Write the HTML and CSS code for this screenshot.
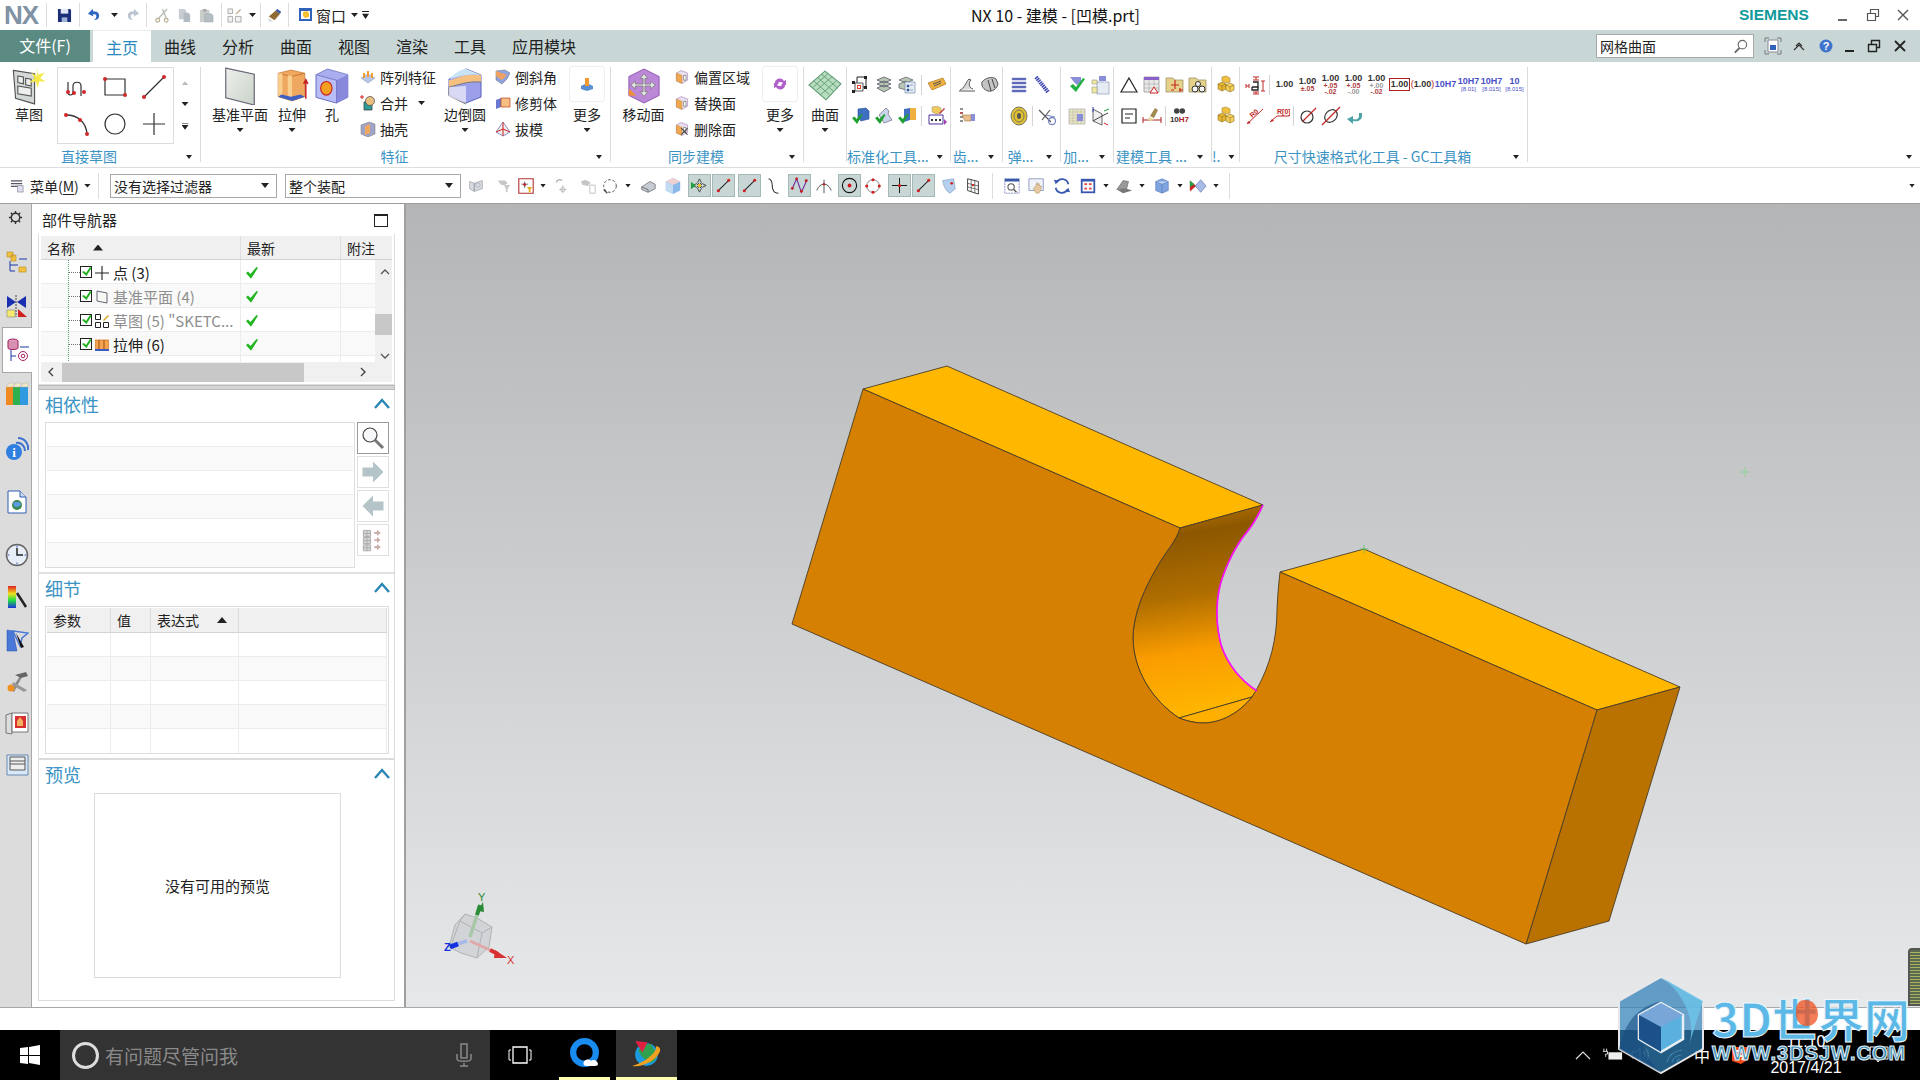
FILE: index.html
```html
<!DOCTYPE html>
<html lang="zh-CN">
<head>
<meta charset="UTF-8">
<title>NX 10 - 建模 - [凹模.prt]</title>
<link rel="stylesheet" href="styles.css">
</head>
<body>

<svg class="defs" width="0" height="0">
  <defs>
    <linearGradient id="notchFill" x1="0.45" y1="0" x2="0.55" y2="1">
      <stop offset="0" stop-color="#b87400"/>
      <stop offset="0.13" stop-color="#8c5700"/>
      <stop offset="0.42" stop-color="#b06e00"/>
      <stop offset="0.68" stop-color="#fa9c00"/>
      <stop offset="1" stop-color="#ffb900"/>
    </linearGradient>
    <linearGradient id="viewBg" x1="0" y1="0" x2="0" y2="1">
      <stop offset="0" stop-color="#b4b5b6"/>
      <stop offset="1" stop-color="#e7e8ea"/>
    </linearGradient>
    <linearGradient id="planeFill" x1="0" y1="0" x2="1" y2="1">
      <stop offset="0" stop-color="#eef0ec"/>
      <stop offset="1" stop-color="#c8d2c8"/>
    </linearGradient>
    <symbol id="gold" viewBox="0 0 20 20">
      <path d="M6 2l4-1 4 2v4l-4 1-4-2z" fill="#f0c040" stroke="#a5842c" stroke-width=".6"/>
      <path d="M2 9l4-2 4 2v5l-4 2-4-2z" fill="#e8b830" stroke="#8a7028" stroke-width=".6"/>
      <path d="M10 10l4-2 4 2v5l-4 2-4-2z" fill="#f6d25a" stroke="#8a7028" stroke-width=".6"/>
      <path d="M2 9l4 2 4-2M10 10l4 2 4-2M6 11v5M14 12v5" fill="none" stroke="#8a7028" stroke-width=".6"/>
    </symbol>
    <symbol id="tick" viewBox="0 0 14 14">
      <path d="M1 7l2-1.500 2.500 2.500 6-7 1.500.8-7 11z" fill="#22b522"/>
    </symbol>
    <symbol id="chk" viewBox="0 0 13 13">
      <rect x=".5" y=".5" width="11" height="11" fill="#fff" stroke="#222"/>
      <path d="M2 6l2-1 2 2 4-6 1.500 1-5 8z" fill="#1eb01e"/>
    </symbol>
    <symbol id="greyblock" viewBox="0 0 20 20">
      <path d="M3 5l5 2v9l-5-3zM8 7l9-3v9l-9 3z" fill="#d8dbe0" stroke="#9aa0a8" stroke-width=".8"/>
      <circle cx="12" cy="9" r="2.500" fill="none" stroke="#aab" stroke-width=".8"/>
    </symbol>
    <symbol id="lineRed" viewBox="0 0 22 22">
      <path d="M5 17L17 5" stroke="#222" stroke-width="1.200"/>
      <circle cx="5" cy="17" r="1.800" fill="#d02020"/><circle cx="17" cy="5" r="1.800" fill="#d02020"/>
    </symbol>
    <symbol id="faceCube" viewBox="0 0 20 20">
      <path d="M9 2l8 3v9l-7 4-7-3V5z" fill="#e8e0ee" stroke="#9a7ab0" stroke-width=".7"/>
      <path d="M3 5l7 3v10l-7-3z" fill="#f0a850" stroke="#c07820" stroke-width=".5"/>
      <path d="M12 8h3v6h-3z" fill="#fff" stroke="#555" stroke-width=".7"/>
    </symbol>
    <symbol id="greentickA" viewBox="0 0 20 20">
      <path d="M7 3l8-1 3 3v8l-8 2-3-3z" fill="#3f6fc0" stroke="#23509a" stroke-width=".6"/>
      <path d="M1 12l2.500-1.500 2 2.500L10 8l1.500 1L6 18z" fill="#20a030"/>
    </symbol>
  </defs>
</svg>

<!-- title bar -->
<header class="titlebar">
  <div class="qat">
    <span class="nx-logo">NX</span>
    <i class="qsep"></i>
    <svg class="qi q-save" viewBox="0 0 16 16"><path d="M1 1h13l1 1v13H1z" fill="#1b2e78"/><path d="M4 1h8v5H4z" fill="#dfe6f4"/><path d="M5 10h6v5H5z" fill="#9fb3d8"/></svg>
    <i class="qsep q-s1"></i>
    <svg class="qi q-undo" viewBox="0 0 16 16"><path d="M7 13c4 0 6-2 6-5s-3-5-6-4L6 1 1 6l6 3-1-2c3-1 4 0 4 2 0 1-1 3-3 4z" fill="#2c66c0"/></svg>
    <span class="arr q-a1"></span>
    <svg class="qi q-redo" viewBox="0 0 16 16"><path d="M9 13c-4 0-6-2-6-5s3-5 6-4l1-3 5 5-6 3 1-2c-3-1-4 0-4 2 0 1 1 3 3 4z" fill="#b9c4cf"/></svg>
    <i class="qsep q-s2"></i>
    <svg class="qi q-cut" viewBox="0 0 16 16"><path d="M14 1L5 11M9 1l4 10" stroke="#b8bfb6" stroke-width="1.500" fill="none"/><circle cx="4" cy="13" r="2" fill="none" stroke="#b8b090" stroke-width="1.300"/><circle cx="13" cy="13" r="2" fill="none" stroke="#b8b090" stroke-width="1.300"/></svg>
    <svg class="qi q-copy" viewBox="0 0 16 16"><path d="M2 1h6l2 2v9H2z" fill="#c6ccd2"/><path d="M7 5h5l2 2v8H7z" fill="#b2bac2"/></svg>
    <svg class="qi q-paste" viewBox="0 0 16 16"><path d="M1 2h10v13H1z" fill="#c9ceca"/><path d="M6 6h7l2 2v7H6z" fill="#b4bdc2" stroke="#9aa" stroke-width=".5"/><path d="M4 1h4v3H4z" fill="#aaa"/></svg>
    <i class="qsep q-s3"></i>
    <svg class="qi q-grp" viewBox="0 0 16 16"><path d="M1 1h5v5H1zM1 9h5v6H1zM9 9h6v6H9z" fill="#f2f2f2" stroke="#aaa"/><path d="M9 6l5-5 1 1-5 5z" fill="#b9a98a"/></svg>
    <span class="arr q-a2"></span>
    <i class="qsep q-s4"></i>
    <svg class="qi q-brush" viewBox="0 0 16 16"><path d="M2 9l7-6 5 3-6 7z" fill="#8f6a32"/><path d="M9 3l2-2 4 3-1 2z" fill="#3454a8"/><path d="M1 10l6 4-5 1z" fill="#ddd"/></svg>
    <i class="qsep q-s5"></i>
    <svg class="qi q-win" viewBox="0 0 16 16"><path d="M1 1h13v13H1z" fill="#2f62b8"/><path d="M3 4h9v8H3z" fill="#fff"/><path d="M5 5l4-1 2 2v4l-4 1-2-2z" fill="#f4c030"/></svg>
    <span class="q-wintext">窗口</span>
    <span class="arr q-a3"></span>
    <span class="arr arr-bar q-a4"></span>
  </div>
  <div class="doc-title">NX 10 - 建模 - [凹模.prt]</div>
  <div class="siemens">SIEMENS</div>
  <div class="winbtns">
    <svg viewBox="0 0 14 14"><path d="M2 12h9" stroke="#666" stroke-width="2"/></svg>
    <svg viewBox="0 0 14 14"><path d="M1.500 5.500h8v7h-8zM4.500 5V1.500h8v7H10" fill="none" stroke="#555" stroke-width="1.200"/></svg>
    <svg viewBox="0 0 14 14"><path d="M2 2l10 10M12 2L2 12" stroke="#555" stroke-width="1.400"/></svg>
  </div>
</header>

<!-- tabs -->
<nav class="tabbar">
  <div class="tab-file">文件(F)</div>
  <div class="tab tab-on">主页</div>
  <div class="tab">曲线</div>
  <div class="tab">分析</div>
  <div class="tab">曲面</div>
  <div class="tab">视图</div>
  <div class="tab">渲染</div>
  <div class="tab">工具</div>
  <div class="tab tab-wide">应用模块</div>
  <div class="cmd-search">
    <span>网格曲面</span>
    <svg viewBox="0 0 16 16"><circle cx="10" cy="6" r="4.500" fill="none" stroke="#666" stroke-width="1.200"/><path d="M7 9.500L2 14.500" stroke="#666" stroke-width="2"/></svg>
  </div>
  <div class="tabbar-tools">
    <svg class="tt-full" viewBox="0 0 18 18"><path d="M1 5V1h4M13 1h4v4M17 13v4h-4M5 17H1v-4" fill="none" stroke="#777"/><path d="M4 3h10v12H4z" fill="#fff" stroke="#889"/><path d="M6 8h6v5H6z" fill="#2f62b8"/></svg>
    <svg class="tt-up" viewBox="0 0 14 14"><path d="M2 11l5-5 5 5M4 7l3-3 3 3" fill="none" stroke="#333" stroke-width="1.200"/></svg>
    <svg class="tt-help" viewBox="0 0 14 14"><circle cx="7" cy="7" r="6.500" fill="#3f73cc"/><text x="7" y="11" text-anchor="middle" font-size="11" font-weight="700" fill="#fff" font-family="Liberation Sans">?</text></svg>
    <svg class="tt-min" viewBox="0 0 14 14"><path d="M2 12h9" stroke="#222" stroke-width="2"/></svg>
    <svg class="tt-rest" viewBox="0 0 14 14"><path d="M1.500 5.500h8v7h-8zM4.500 5V1.500h8v7H10" fill="none" stroke="#222" stroke-width="1.400"/></svg>
    <svg class="tt-close" viewBox="0 0 14 14"><path d="M2 2l10 10M12 2L2 12" stroke="#222" stroke-width="1.800"/></svg>
  </div>
</nav>

<!-- ribbon -->
<section class="ribbon">

  <div class="grp">
    <div class="grp-body g-sketch">
      <div class="big big-sketch">
        <svg class="big-icon" viewBox="0 0 30 34"><path d="M1 3l19 3v27L3 28z" fill="#d5d8d8" stroke="#555"/><path d="M5 8l5 1v6l-5-1zM12 10l5 1v6l-5-1zM5 17l12 2v7l-12-2z" fill="#eee" stroke="#555"/><path d="M22 1l1 6 6-2-4 5 5 3-6 0-1 6-2-6-6 1 5-4-3-5 5 3z" fill="#f6e94a"/></svg>
        <span>草图</span>
      </div>
      <div class="gallery">
        <svg viewBox="0 0 34 30"><path d="M8 10v10c0 4 5 4 5 0v-6c0-5 8-5 8 0v10" fill="none" stroke="#333" stroke-width="1.200"/><circle cx="8" cy="20" r="2" fill="#d02828"/><circle cx="14" cy="21" r="2" fill="#d02828"/><circle cx="24" cy="20" r="2" fill="#d02828"/></svg>
        <svg viewBox="0 0 34 30"><path d="M7 7h20v16H7z" fill="none" stroke="#333" stroke-width="1.200"/><circle cx="7" cy="7" r="2" fill="#d02828"/><circle cx="27" cy="23" r="2" fill="#d02828"/></svg>
        <svg viewBox="0 0 34 30"><path d="M7 25L27 5" stroke="#333" stroke-width="1.200"/><circle cx="7" cy="25" r="2" fill="#d02828"/><circle cx="27" cy="5" r="2" fill="#d02828"/></svg>
        <svg viewBox="0 0 34 30"><path d="M6 6c12 0 20 7 21 19" fill="none" stroke="#333" stroke-width="1.300"/><circle cx="6" cy="6" r="2" fill="#d02828"/><circle cx="20" cy="11" r="2" fill="#d02828"/><circle cx="27" cy="25" r="2" fill="#d02828"/></svg>
        <svg viewBox="0 0 34 30"><circle cx="17" cy="15" r="10" fill="none" stroke="#333" stroke-width="1.200"/></svg>
        <svg viewBox="0 0 34 30"><path d="M17 4v22M6 15h22" stroke="#333" stroke-width="1.200"/></svg>
      </div>
      <div class="gal-scroll">
        <span class="arr arr-up"></span>
        <span class="arr"></span>
        <span class="arr arr-bar"></span>
      </div>
    </div>
    <div class="grp-label"><span>直接草图</span><b class="arr"></b></div>
  </div>

  <div class="grp">
    <div class="grp-body g-feat">
      <div class="big big-plane">
        <svg class="big-icon" viewBox="0 0 28 32"><path d="M2 1l24 5v26L2 26z" fill="url(#planeFill)" stroke="#667"/></svg>
        <span>基准平面</span><span class="arr"></span>
      </div>
      <div class="big big-extrude">
        <svg class="big-icon" viewBox="0 0 32 32"><path d="M3 4l12-3 13 3v22l-12 4-13-4z" fill="#f0a860" stroke="#c87830" stroke-width=".7"/><path d="M3 4l12 3 13-3" fill="none" stroke="#c87830"/><path d="M3 4h4v22H3zM12 6h4v24h-4z" fill="#f9cf90"/><path d="M3 26l13 4 12-4-4-2-9 2-9-2z" fill="#3e5fc4"/><path d="M29 28V12M27 14l2-4 2 4" fill="none" stroke="#c82020" stroke-width="1.400"/></svg>
        <span>拉伸</span><span class="arr"></span>
      </div>
      <div class="big big-hole">
        <svg class="big-icon" viewBox="0 0 30 32"><path d="M1 6l10-5 18 5v20l-10 5-18-5z" fill="#a8aeee" stroke="#6a70c0" stroke-width=".7"/><path d="M1 6l18 5 10-5v20l-10 5z" fill="#8888dd"/><path d="M1 6l18 5v20l-18-5z" fill="#b8bdf6" stroke="#6a70c0" stroke-width=".7"/><ellipse cx="10" cy="18" rx="5" ry="6" fill="#f4a020" stroke="#c82020"/></svg>
        <span>孔</span>
      </div>
      <div class="cmds cmds-a">
        <div class="cmd"><svg viewBox="0 0 16 16"><path d="M1 9l7-4 7 4-7 5z" fill="#b9c6e8" stroke="#7a8ab8" stroke-width=".5"/><path d="M3 4h2v5H3zM7 2h2v6H7zM11 4h2v5h-2z" fill="#f09a30"/></svg><span>阵列特征</span></div>
        <div class="cmd"><svg viewBox="0 0 16 16"><path d="M4 7h8v8H4z" fill="#2e9a98" stroke="#333" stroke-width=".7"/><circle cx="10" cy="6" r="4.500" fill="#e9c080" stroke="#444" stroke-width=".7"/><path d="M1 0v4M-1 2h4" stroke="#d02020" transform="translate(1 0)"/></svg><span>合并</span><b class="arr"></b></div>
        <div class="cmd"><svg viewBox="0 0 16 16"><path d="M1 4l8-3 6 2v10l-7 3-7-3z" fill="#a0a4c8" stroke="#777" stroke-width=".5"/><path d="M5 5l5-2v9l-5 2z" fill="#f0a860"/></svg><span>抽壳</span></div>
      </div>
      <div class="big big-blend">
        <svg class="big-icon" viewBox="0 0 34 36"><path d="M1 11l17-10 15 6v22l-15 6-17-8z" fill="#9ca0ea" stroke="#5960b8"/><path d="M1 12c6 0 12-7 32-5v7c-14-1-22 3-32 5z" fill="#f6c080"/><path d="M1 11c8-8 14-10 17-10l15 6c-12-2-24 2-32 4z" fill="#c9e4f4"/><path d="M1 19c10-2 18-6 32-5M1 19v9l17 8" fill="none" stroke="#777"/><path d="M1 19v10l17 6V18z" fill="#f2f2fa" opacity=".7"/></svg>
        <span>边倒圆</span><span class="arr"></span>
      </div>
      <div class="cmds cmds-b">
        <div class="cmd"><svg viewBox="0 0 16 16"><path d="M1 2l9-1 5 3-3 6-5 5-6-4z" fill="#8fa4dc" stroke="#667" stroke-width=".5"/><path d="M1 2l11 4-5 5-6-4z" fill="#f0a060"/></svg><span>倒斜角</span></div>
        <div class="cmd"><svg viewBox="0 0 16 16"><path d="M1 5l5-2v9l-5 2z" fill="#6c78d0"/><path d="M6 3h9v9H6z" fill="#f6c080" stroke="#c04020" stroke-width=".7"/></svg><span>修剪体</span></div>
        <div class="cmd"><svg viewBox="0 0 16 16"><path d="M8 1l7 10-7 4-7-4z" fill="#eee" stroke="#8a90c0"/><path d="M8 1v14" stroke="#d02020"/><path d="M1 11l7-3 7 3" fill="none" stroke="#d02020"/></svg><span>拔模</span></div>
      </div>
      <div class="big big-more">
        <div class="more-box"><svg viewBox="0 0 16 16"><path d="M2 10l6-3 6 3v3l-6 2-6-2z" fill="#5c8fd0"/><path d="M6 2h4v8H6z" fill="#f09a30"/></svg></div>
        <span>更多</span><span class="arr"></span>
      </div>
    </div>
    <div class="grp-label"><span>特征</span><b class="arr"></b></div>
  </div>

  <div class="grp">
    <div class="grp-body g-sync">
      <div class="big big-move">
        <svg class="big-icon" viewBox="0 0 36 38"><path d="M18 1l16 8v20l-16 8-16-8V9z" fill="#bb88d8" stroke="#8a55b0"/><path d="M2 22l8 7-8 0z" fill="#f09030"/><path d="M18 6l4 5h-3v6h6v-3l5 4-5 4v-3h-6v6h3l-4 5-4-5h3v-6H9v3l-5-4 5-4v3h8v-6h-3z" fill="#e4e4e4" stroke="#777" stroke-width=".8"/></svg>
        <span>移动面</span>
      </div>
      <div class="cmds cmds-c">
        <div class="cmd"><svg viewBox="0 0 20 20"><use href="#faceCube"/></svg><span>偏置区域</span></div>
        <div class="cmd"><svg viewBox="0 0 20 20"><use href="#faceCube"/></svg><span>替换面</span></div>
        <div class="cmd"><svg viewBox="0 0 20 20"><use href="#faceCube"/><path d="M9 9l8 8M17 9l-8 8" stroke="#444" stroke-width="1.300"/></svg><span>删除面</span></div>
      </div>
      <div class="big big-more">
        <div class="more-box"><svg viewBox="0 0 16 16"><path d="M3 7c0-5 7-6 9-2l2-1v5h-5l2-2c-2-2-5-1-6 1zM13 9c0 5-7 6-9 2l-2 1V7h5L5 9c2 2 5 1 6-1z" fill="#b060c8"/></svg></div>
        <span>更多</span><span class="arr"></span>
      </div>
    </div>
    <div class="grp-label"><span>同步建模</span><b class="arr"></b></div>
  </div>

  <div class="grp">
    <div class="grp-body g-surf">
      <div class="big big-surf">
        <svg class="big-icon" viewBox="0 0 32 32"><path d="M1 15L16 2l15 12-14 15z" fill="#b8dcc0" stroke="#5a9a70"/><path d="M5 11l15 13M9 8l15 13M13 5l15 13M12 24L27 11M8 20L23 7M5 17L19 4" stroke="#5a9a70" stroke-width=".8"/></svg>
        <span>曲面</span><span class="arr"></span>
      </div>
    </div>
    <div class="grp-label"></div>
  </div>

  <div class="grp">
    <div class="grp-body tools g-std">
      <div class="trow">
        <svg viewBox="0 0 20 20"><path d="M6 2h9v10H6z" fill="none" stroke="#222"/><path d="M4 8h8v8H4z" fill="#fff" stroke="#555"/><rect x="6.500" y="10.500" width="3" height="3" fill="none" stroke="#e04020"/><path d="M1 6h3v3H1zM13 1h3v3h-3zM13 11h3v3h-3zM1 15h3v3H1z" fill="#222"/></svg>
        <svg viewBox="0 0 20 20"><path d="M3 5l7-3 7 3-7 3zM3 9l7-3 7 3-7 3zM3 13l7-3 7 3-7 4z" fill="#b8c6b4" stroke="#556" stroke-width=".8"/></svg>
        <svg viewBox="0 0 20 20"><path d="M2 5l7-3 7 3-7 3zM2 9l7-3v9l-7-2z" fill="#b8c6b4" stroke="#556" stroke-width=".7"/><path d="M8 7h10v11H8z" fill="#e4ecf6" stroke="#7a8aa8" stroke-width=".7"/><path d="M10 10h2v2h-2zM13 10h3M10 14h2v2h-2zM13 15h3" fill="#3a5a9a" stroke="#3a5a9a" stroke-width=".5"/></svg>
        <i class="vs"></i>
        <svg viewBox="0 0 20 20"><path d="M1 8l15-5 3 6-14 6z" fill="#f0b040" stroke="#a87820" stroke-width=".7"/><path d="M6 9l8-3M7 11l7-3" stroke="#555"/></svg>
      </div>
      <div class="trow">
        <svg viewBox="0 0 20 20"><use href="#greentickA"/></svg>
        <svg viewBox="0 0 20 20"><path d="M5 9l7-7 3 3-1 3 4 6-8 3z" fill="#c8d4ec" stroke="#556" stroke-width=".6"/><path d="M1 12l2.500-1.500 2 2.500L10 8l1.500 1L6 18z" fill="#20a030"/></svg>
        <svg viewBox="0 0 20 20"><path d="M7 3l6-1v12l-6 2z" fill="#3f6fc0"/><path d="M13 2h6v12h-6z" fill="#f0b040"/><path d="M1 12l2.500-1.500 2 2.500L10 8l1.500 1L6 18z" fill="#20a030"/></svg>
        <i class="vs"></i>
        <svg viewBox="0 0 20 20"><path d="M5 1l5-1 4 2v5l-5 1-4-2z" fill="#f0c860" stroke="#997" stroke-width=".5"/><path d="M2 9h14v9H2z" fill="#fff" stroke="#5030a0"/><path d="M4 13h2v2H4zM8 13h2v2H8zM12 13h2v2h-2z" fill="#333"/><path d="M17 13l3 3-3 3z" fill="#a040b0"/><path d="M12 7l5-5 1 1-5 5z" fill="#c04040"/></svg>
      </div>
    </div>
    <div class="grp-label"><span>标准化工具...</span><b class="arr"></b></div>
  </div>

  <div class="grp">
    <div class="grp-body tools g-gear">
      <div class="trow">
        <svg viewBox="0 0 20 20"><path d="M2 16h16M3 15c4-1 6-8 9-11l2 1c-3 3-2 8 2 9" fill="#d8d8d8" stroke="#555"/></svg>
        <svg viewBox="0 0 20 20"><path d="M2 7c3-4 10-6 14-3l2 5c-1 5-6 8-10 7-4-1-7-5-6-9z" fill="#c4c4c4" stroke="#555"/><path d="M8 5l3 11M12 4l3 9" stroke="#444"/></svg>
      </div>
      <div class="trow">
        <svg viewBox="0 0 20 20"><path d="M3 3h3M3 7h3M3 11h3M3 15h3" stroke="#222"/><path d="M3 7h3" stroke="#d02020"/><path d="M5 9h9v6H8z" fill="#e8c090" stroke="#a07040" stroke-width=".6"/><path d="M14 8h4v7h-4z" fill="#8a8fd8"/></svg>
      </div>
    </div>
    <div class="grp-label"><span>齿...</span><b class="arr"></b></div>
  </div>

  <div class="grp">
    <div class="grp-body tools g-spring">
      <div class="trow">
        <svg viewBox="0 0 20 20"><path d="M3 3h14v2H3zM3 7h14v2H3zM3 11h14v2H3zM3 15h14v2H3z" fill="#4a5ab8" stroke="#8a90c8" stroke-width=".6"/></svg>
        <svg viewBox="0 0 20 20"><path d="M4 2l12 15" stroke="#4048b0" stroke-width="4" stroke-dasharray="1.500 .7"/></svg>
      </div>
      <div class="trow">
        <svg viewBox="0 0 20 20"><ellipse cx="10" cy="10" rx="8" ry="9" fill="#e0c030" stroke="#776" /><ellipse cx="10" cy="10" rx="5" ry="6" fill="none" stroke="#776"/><ellipse cx="10" cy="10" rx="2" ry="3" fill="#555"/></svg>
        <i class="vs tight"></i>
        <svg viewBox="0 0 20 20"><path d="M2 4l12 12M5 14L13 4" stroke="#555" stroke-width="1.200"/><circle cx="15" cy="15" r="3.500" fill="none" stroke="#7a86c0" stroke-width="1.300"/><path d="M9 9l9 2" stroke="#7a86c0"/></svg>
      </div>
    </div>
    <div class="grp-label"><span>弹...</span><b class="arr"></b></div>
  </div>

  <div class="grp">
    <div class="grp-body tools g-add">
      <div class="trow">
        <svg viewBox="0 0 20 20"><path d="M3 2h11v5l-4 3-3-3z" fill="#8a8ed8"/><path d="M3 11l3-2 3 3 7-9 2 1-9 13z" fill="#22b040"/></svg>
        <svg viewBox="0 0 20 20"><path d="M7 7h12v12H7z" fill="#e6ecf4" stroke="#8a9ab8" stroke-width=".7"/><path d="M2 5h5v4H2zM2 12h5v6H2z" fill="#f0e8a0" stroke="#998" stroke-width=".6"/><path d="M9 1h7v5H9z" fill="#8a8ed8"/></svg>
      </div>
      <div class="trow">
        <svg viewBox="0 0 20 20"><path d="M2 3h16v15H2z" fill="#ece6c8" stroke="#aaa" stroke-width=".7"/><path d="M2 6h16M2 9h16M2 12h16M2 15h16M6 3v15M10 3v15M14 3v15" stroke="#b8b8a0" stroke-width=".6"/><path d="M10 8h6v7h-6z" fill="#8a8ed8"/></svg>
        <svg viewBox="0 0 20 20"><path d="M3 3v12l9 4V8z" fill="#f0f0f0" stroke="#444" stroke-width=".8"/><path d="M3 15l9-5 6-3" stroke="#444" fill="none"/><path d="M3 1v5" stroke="#3040b0"/><path d="M14 5l5-2" stroke="#20a040"/><path d="M14 17l4 2" stroke="#d02020"/></svg>
      </div>
    </div>
    <div class="grp-label"><span>加...</span><b class="arr"></b></div>
  </div>

  <div class="grp">
    <div class="grp-body tools g-model">
      <div class="trow">
        <svg viewBox="0 0 20 20"><path d="M10 3l8 14H2z" fill="none" stroke="#222" stroke-width="1.200"/></svg>
        <svg viewBox="0 0 20 20"><path d="M2 2h15v15H2z" fill="#e8e8e8" stroke="#888" stroke-width=".7"/><path d="M2 2h15v3H2z" fill="#8a60c8"/><path d="M2 9h15M2 13h15M7 5v12M12 5v12" stroke="#aaa" stroke-width=".6"/><path d="M12 12l4 6H8z" fill="#fff" stroke="#d02020"/></svg>
        <svg viewBox="0 0 20 20"><path d="M1 5V3h7l2 2h8v12H1z" fill="#e4d28a" stroke="#998860" stroke-width=".7"/><path d="M10 5v9M6 10h8M6 15h3M14 15h4M15 13v4" stroke="#c82020" stroke-width="1.100"/></svg>
        <svg viewBox="0 0 20 20"><path d="M1 5V3h7l2 2h8v12H1z" fill="#e4d28a" stroke="#998860" stroke-width=".7"/><circle cx="7" cy="14" r="3" fill="#f4f4f4" stroke="#333"/><circle cx="14" cy="14" r="3" fill="#f4f4f4" stroke="#333"/><circle cx="10" cy="9" r="2.500" fill="#f4f4f4" stroke="#333"/></svg>
      </div>
      <div class="trow">
        <svg viewBox="0 0 20 20"><path d="M3 3h14v14H3z" fill="#fff" stroke="#222" stroke-width="1.200"/><path d="M6 8h8M6 12h5" stroke="#222"/></svg>
        <svg viewBox="0 0 20 20"><path d="M1 14h18M1 11v6M19 11v6" stroke="#b02020"/><path d="M8 10l5-8 3 2-4 8z" fill="#a08a50"/><path d="M7 11l5 2-2 2-4-1z" fill="#e4d8a0"/></svg>
        <i class="vs tight"></i>
        <div class="fit-cell">
          <svg viewBox="0 0 14 8"><circle cx="4" cy="4" r="3" fill="#444"/><circle cx="10" cy="4" r="3" fill="#444"/></svg>
          <span class="h7">10<em>H7</em></span>
        </div>
      </div>
    </div>
    <div class="grp-label"><span>建模工具 ...</span><b class="arr"></b></div>
  </div>

  <div class="grp">
    <div class="grp-body tools g-mark">
      <div class="trow"><svg viewBox="0 0 20 20"><use href="#gold"/></svg></div>
      <div class="trow"><svg viewBox="0 0 20 20"><use href="#gold"/></svg></div>
    </div>
    <div class="grp-label"><span>!.</span><b class="arr"></b></div>
  </div>

  <div class="grp">
    <div class="grp-body tools g-dim">
      <div class="trow">
        <svg viewBox="0 0 20 20"><path d="M8 7h5v5H7" fill="none" stroke="#222" stroke-width="1.300"/><path d="M7 12v3h6v-3" fill="none" stroke="#222" stroke-width="1.300"/><path d="M8 2h6M8 5h6M11 2v3M16 6h4M16 16h4M18 6v10M1 9v4M4 9v4M1 11h3M8 17h6M8 19h6M11 17v2" stroke="#c02828" fill="none"/></svg>
        <i class="vs"></i>
        <span class="fmt"><b>1.00</b></span>
        <span class="fmt"><b>1.00</b><u>±.05</u></span>
        <span class="fmt"><b>1.00</b><u>+.05<br>-.02</u></span>
        <span class="fmt"><b>1.00</b><u>+.05<br><s>-.00</s></u></span>
        <span class="fmt"><b>1.00</b><u><s>+.00</s><br>-.02</u></span>
        <span class="fmt"><b class="boxed">1.00</b></span>
        <span class="fmt"><b class="paren"><i>(</i>1.00<i>)</i></b></span>
        <span class="fmt blue"><b>10H7</b></span>
        <span class="fmt blue"><b>10H7</b><u>[8.01]</u></span>
        <span class="fmt blue"><b>10H7</b><u>[8.015]</u></span>
        <span class="fmt blue"><b>10</b><u>[8.015]</u></span>
      </div>
      <div class="trow">
        <svg viewBox="0 0 20 20"><path d="M2 18L18 3" stroke="#c02828"/><path d="M2 18l4-1-3-2z" fill="#c02828"/><text x="6" y="11" font-size="7" font-weight="700" fill="#c02828" font-family="Liberation Sans" transform="rotate(-42 8 10)">R0</text></svg>
        <svg class="wide" viewBox="0 0 22 20"><path d="M2 16l7-6h12" fill="none" stroke="#c02828"/><path d="M2 16l2-3 2 2z" fill="#c02828"/><text x="9" y="8" font-size="7" font-weight="700" fill="#c02828" font-family="Liberation Sans">R[0]</text></svg>
        <i class="vs tight"></i>
        <svg viewBox="0 0 20 20"><circle cx="9" cy="11" r="6" fill="none" stroke="#333" stroke-width="1.200"/><path d="M5 15L18 2" stroke="#c02828" stroke-width="1.200"/></svg>
        <svg viewBox="0 0 20 20"><ellipse cx="10" cy="10" rx="7" ry="5.500" fill="none" stroke="#333" stroke-width="1.200" transform="rotate(-45 10 10)"/><path d="M1 19L19 1" stroke="#c02828" stroke-width="1.200"/></svg>
        <svg viewBox="0 0 20 20"><path d="M15 7v3c0 3-3 4-6 3V10L3 13l6 5v-3c5 1 9-1 9-5V7z" fill="#4fa4a8"/></svg>
      </div>
    </div>
    <div class="grp-label"><span>尺寸快速格式化工具 - GC工具箱</span><b class="arr"></b></div>
  </div>

  <div class="grp grp-last">
    <div class="grp-body"></div>
    <div class="grp-label"><span></span><b class="arr"></b></div>
  </div>
</section>

<!-- selection bar -->
<section class="selbar">
  <div class="menu-btn">
    <svg viewBox="0 0 16 16"><path d="M1 3h12M1 6h12M1 9h12" stroke="#556" stroke-width="1.300"/><path d="M8 8h6v7H8z" fill="#dde" stroke="#889" stroke-width=".7"/></svg>
    <span>菜单(<u>M</u>)</span>
    <b class="arr"></b>
  </div>
  <i class="selsep"></i>
  <div class="combo combo-a"><span>没有选择过滤器</span><b class="arr"></b></div>
  <div class="combo combo-b"><span>整个装配</span><b class="arr"></b></div>
  <div class="sel-tools">
    <svg viewBox="0 0 20 20"><use href="#greyblock"/></svg>
    <svg class="g6" viewBox="0 0 20 20"><path d="M3 4h8l3 3-3 2H7z" fill="#c6c6c6"/><path d="M10 9h7l-3 4v4h-2v-4z" fill="#c9c9c9"/></svg>
    <svg viewBox="0 0 20 20"><path d="M2 2h16v16H2z" fill="#fff" stroke="#b03030" stroke-width="1.200"/><path d="M5 8h7M8.500 5v7" stroke="#555"/><circle cx="8.500" cy="8.500" r="1.500" fill="#c02020"/><path d="M11 11h6l-2 3v3h-2v-3z" fill="#e8b020"/></svg>
    <b class="arr g1"></b>
    <svg class="g2" viewBox="0 0 20 20"><path d="M5 6c0-3 4-4 6-2" fill="none" stroke="#aaa" stroke-width="1.500"/><path d="M12 9v9M8 14h8" stroke="#bbb"/><circle cx="12" cy="14" r="2.500" fill="none" stroke="#bbb"/></svg>
    <svg class="g5" viewBox="0 0 20 20"><path d="M2 5l5-2 6 3-3 4-6-1z" fill="#c6c6c6"/><path d="M12 9h6v9h-6z" fill="none" stroke="#c0c0c0"/></svg>
    <svg viewBox="0 0 20 20"><circle cx="10" cy="10" r="7" fill="none" stroke="#444" stroke-dasharray="3 2"/><path d="M3 14l4 4" stroke="#444" stroke-width="1.500"/></svg>
    <b class="arr g2"></b>
    <svg class="g4" viewBox="0 0 20 20"><path d="M3 11l9-6 6 3v5l-8 4-7-3z" fill="#c7ccd4" stroke="#666" stroke-width=".8"/><path d="M3 11l7 3v3" fill="none" stroke="#666"/></svg>
    <svg class="g3" viewBox="0 0 20 20"><path d="M10 1l8 4v10l-8 4-8-4V5z" fill="#8ab8e8"/><path d="M10 1l8 4-8 4-8-4z" fill="#f0d0d0"/><path d="M2 5l8 4v10l-8-4z" fill="#c2daf2"/></svg>
    <span class="tog g4"><svg viewBox="0 0 20 20"><path d="M10 3l2 4-2 2-2-2zM10 17l-2-4 2-2 2 2zM3 10l4-2 2 2-2 2zM17 10l-4 2-2-2 2-2z" fill="none" stroke="#444"/><circle cx="10" cy="10" r="1.800" fill="#e8c020"/><path d="M1 6l5 4-5 4z" fill="#20a040"/></svg></span>
    <span class="tog g1"><svg viewBox="0 0 22 22"><use href="#lineRed"/></svg></span>
    <span class="tog g3"><svg viewBox="0 0 22 22"><use href="#lineRed"/></svg></span>
    <svg class="g1" viewBox="0 0 20 20"><path d="M5 2c6 1 3 8 5 12 1 3 3 4 6 4" fill="none" stroke="#333" stroke-width="1.200"/></svg>
    <span class="tog g4"><svg viewBox="0 0 20 20"><path d="M2 14L7 3l5 14 6-13" fill="none" stroke="#7030a0" stroke-width="1.200"/><circle cx="2.500" cy="13" r="1.500" fill="#c02020"/><circle cx="7" cy="3" r="1.500" fill="#c02020"/><circle cx="12" cy="16" r="1.500" fill="#c02020"/><circle cx="17" cy="5" r="1.500" fill="#c02020"/></svg></span>
    <svg class="g2" viewBox="0 0 20 20"><path d="M10 3v15M2 15c2-5 5-7 8-7s6 2 8 7" fill="none" stroke="#444"/><circle cx="10" cy="8" r="1.300" fill="#c02020"/></svg>
    <span class="tog g3"><svg viewBox="0 0 20 20"><circle cx="10" cy="10" r="7.500" fill="none" stroke="#111" stroke-width="1.200"/><circle cx="10" cy="10" r="2" fill="#d01818"/></svg></span>
    <svg class="g1" viewBox="0 0 20 20"><circle cx="10" cy="10" r="7" fill="none" stroke="#777"/><circle cx="10" cy="3" r="1.700" fill="#d02020"/><circle cx="10" cy="17" r="1.700" fill="#d02020"/><circle cx="3" cy="10" r="1.700" fill="#d02020"/><circle cx="17" cy="10" r="1.700" fill="#d02020"/></svg>
    <span class="tog g4"><svg viewBox="0 0 20 20"><path d="M10 2v16M2 10h16" stroke="#111"/><circle cx="10" cy="10" r="1.700" fill="#d01818"/></svg></span>
    <span class="tog g1"><svg viewBox="0 0 22 22"><use href="#lineRed"/></svg></span>
    <svg class="g3" viewBox="0 0 20 20"><path d="M3 4l12-2 2 11-6 5c-4-2-7-7-8-14z" fill="#b4d0ee" stroke="#7a9ac0" stroke-width=".7"/><circle cx="13" cy="7" r="1.500" fill="#d02020"/></svg>
    <svg class="g2" viewBox="0 0 20 20"><path d="M4 2l12 3v14L4 15z" fill="none" stroke="#333"/><path d="M4 7l12 3M4 11l12 3M8 3v13M12 4v14" stroke="#333" stroke-width=".7"/><circle cx="10" cy="9" r="1.300" fill="#d02020"/></svg>
    <i class="selsep sep-view"></i>
    <svg viewBox="0 0 20 20"><path d="M2 2h16v16H2z" fill="#fff" stroke="#7a86c0" stroke-dasharray="2 1"/><path d="M2 2h16v3H2z" fill="#3858a8"/><circle cx="9" cy="11" r="3.500" fill="none" stroke="#555" stroke-width="1.200"/><path d="M12 14l3 3" stroke="#555" stroke-width="1.500"/></svg>
    <svg class="g3" viewBox="0 0 20 20"><path d="M1 2h16v13H1z" fill="#f0f4fa" stroke="#8898c0"/><path d="M9 9l1-3 1 3 1-2 1 3 2 0-1 5-2 3h-3l-3-5z" fill="#e8c8a0" stroke="#a08050" stroke-width=".5"/></svg>
    <svg class="g3" viewBox="0 0 20 20"><path d="M17 8A7 7 0 0 0 4 6" fill="none" stroke="#3a5ab0" stroke-width="2"/><path d="M3 12a7 7 0 0 0 13 2" fill="none" stroke="#3a5ab0" stroke-width="2"/><path d="M1 3l6 1-4 4zM19 17l-6-1 4-4z" fill="#3a5ab0"/></svg>
    <svg class="g4" viewBox="0 0 20 20"><path d="M2 2h16v16H2z" fill="#3858b0"/><path d="M4 5h12v11H4z" fill="#fff"/><path d="M6 7h3v2H6zM11 7h3v2h-3zM6 12h3v2H6zM11 12h3v2h-3z" fill="#e04040"/></svg>
    <b class="arr g2"></b>
    <svg class="g2" viewBox="0 0 20 20"><path d="M2 14l7-10 6 1-2 8z" fill="#999" stroke="#555" stroke-width=".6"/><path d="M2 14l11-1 6 2-10 3z" fill="#777"/></svg>
    <b class="arr g2"></b>
    <svg class="g4" viewBox="0 0 20 20"><path d="M10 2l7 3v10l-7 3-7-3V5z" fill="#7fa4e0" stroke="#5070b0" stroke-width=".6"/><path d="M3 5l7 3 7-3" fill="#c4d8f4" stroke="#5070b0" stroke-width=".6"/><path d="M10 8v10" stroke="#5070b0" stroke-width=".6"/></svg>
    <b class="arr g2"></b>
    <svg class="g2" viewBox="0 0 20 20"><path d="M1 4l7 6-7 6z" fill="#c82828"/><path d="M1 4l5 4-5 3z" fill="#20a040"/><path d="M13 3l6 7-6 7-6-7z" fill="#a8bce8" stroke="#6070b0" stroke-width=".7"/></svg>
    <b class="arr g2"></b>
    <i class="selsep sep-end"></i>
    <b class="arr arr-far"></b>
  </div>
</section>

<!-- main area -->
<main class="workspace">
  <aside class="rail">
    <svg class="r-gear" viewBox="0 0 16 16"><circle cx="8" cy="8" r="4.500" fill="none" stroke="#333" stroke-width="1.500"/><path d="M8 1v3M8 12v3M1 8h3M12 8h3M3 3l2 2M11 11l2 2M13 3l-2 2M5 11l-2 2" stroke="#333" stroke-width="1.500"/></svg>
    <svg class="r-icon r1" viewBox="0 0 24 24"><path d="M2 3h6v5H2zM6 6h5v6H6z" fill="#f2c040" stroke="#b08a20" stroke-width=".6"/><path d="M5 12v10M5 16h8M14 10h8M5 22h5" stroke="#1a3aa8"/><path d="M14 18h7v5h-7z" fill="#f2c040" stroke="#b08a20" stroke-width=".6"/></svg>
    <svg class="r-icon r2" viewBox="0 0 24 24"><path d="M2 2l9 6-9 6zM21 2l-9 6 9 6z" fill="#1a2fb0"/><path d="M11 1v22" stroke="#444" stroke-dasharray="2 1"/><path d="M2 16h8v7H2z" fill="#f4e870" stroke="#888" stroke-width=".6"/><path d="M13 15l9 8h-9z" fill="#d02020"/></svg>
    <div class="rail-tab">
      <svg viewBox="0 0 24 24"><ellipse cx="7" cy="3" rx="5" ry="2" fill="#e0a0c0" stroke="#a02060"/><path d="M2 3v7c0 2 10 2 10 0V3" fill="#d890b0" stroke="#a02060"/><path d="M5 12v11M5 18h5M14 9h9" stroke="#1a3aa8"/><circle cx="17" cy="18" r="4.500" fill="none" stroke="#a02060"/><circle cx="17" cy="18" r="1.800" fill="none" stroke="#a02060"/></svg>
    </div>
    <svg class="r-icon r3" viewBox="0 0 24 24"><path d="M1 5h7v18H1z" fill="#f08a20"/><path d="M8 5h7v18H8z" fill="#2fb050"/><path d="M15 5h8v18h-8z" fill="#2f9ae0"/><path d="M1 5l3-4h6L8 5zM8 5l3-4h6l-2 4zM15 5l4-4h4v4z" fill="#f2e8c8" stroke="#aaa" stroke-width=".4"/></svg>
    <svg class="r-icon r4" viewBox="0 0 24 24"><path d="M11 7c5-1 9 3 9 8M13 2c6 0 11 5 10 12" fill="none" stroke="#3a70d0" stroke-width="2"/><circle cx="9" cy="16" r="8" fill="#2f7fe0"/><text x="9" y="21" text-anchor="middle" font-size="13" font-weight="700" fill="#fff" font-family="Liberation Serif">i</text></svg>
    <svg class="r-icon r5" viewBox="0 0 24 24"><path d="M3 1h12l6 6v16H3z" fill="#fff" stroke="#2f5fb0"/><path d="M15 1v6h6" fill="#d0dcf4" stroke="#2f5fb0"/><circle cx="12" cy="15" r="5" fill="#3a8a50"/><path d="M8 13c3-2 5 0 7-1l1 3c-2 2-6 3-7 1z" fill="#5a9ae0"/></svg>
    <svg class="r-icon r6" viewBox="0 0 24 24"><circle cx="12" cy="12" r="10.500" fill="#e8eef8" stroke="#666" stroke-width="1.500"/><path d="M12 5v7h6" fill="none" stroke="#222" stroke-width="1.500"/><path d="M12 2.500v2M12 19.500v2M2.500 12h2M19.500 12h2" stroke="#3a5ab0"/></svg>
    <svg class="r-icon r7" viewBox="0 0 24 24"><defs><linearGradient id="rain" x1="0" y1="0" x2="0" y2="1"><stop offset="0" stop-color="#e02020"/><stop offset=".35" stop-color="#f0e020"/><stop offset=".65" stop-color="#20e040"/><stop offset="1" stop-color="#2030e0"/></linearGradient></defs><path d="M3 1h8v22H3z" fill="url(#rain)"/><path d="M12 8l9 14" stroke="#222" stroke-width="2.500"/></svg>
    <svg class="r-icon r8" viewBox="0 0 24 24"><path d="M2 2l6 1 4 20H2z" fill="#4a78d8" stroke="#2a50b0" stroke-width=".5"/><path d="M8 3l15 2-6 5-2 8z" fill="none" stroke="#4a78d8" stroke-width="1.500"/><path d="M11 5l8 14-3 1z" fill="#111"/></svg>
    <svg class="r-icon r9" viewBox="0 0 24 24"><path d="M6 22l9-14 2 1-8 15z" fill="#888"/><path d="M10 7l11-3 2 4-7 2z" fill="#666"/><circle cx="6" cy="20" r="3.500" fill="#f09020"/><path d="M8 14l14 8-3 2L7 17z" fill="#999"/></svg>
    <svg class="r-icon r10" viewBox="0 0 24 24"><path d="M1 4l6-2v21l-6-1z" fill="#ddd" stroke="#777"/><path d="M7 2h16v19H7z" fill="#fff" stroke="#777"/><path d="M10 5h11v12H10z" fill="#d83030"/><path d="M12 10l3-4 3 4v5h-6z" fill="#f4b060"/></svg>
    <svg class="r-icon r11" viewBox="0 0 24 24"><path d="M2 2h21v20H2z" fill="#d8e8f8" stroke="#6a8ab0"/><path d="M5 4h15v13H5z" fill="#eee" stroke="#555"/><path d="M5 8h15M5 11h15" stroke="#555"/></svg>
  </aside>

  <section class="sidepanel">
    <div class="panel-frame">
      <div class="nav-title"><span>部件导航器</span><i class="maxbox"></i></div>

      <div class="navtable">
        <div class="nav-head">
          <div class="nh nh-name"><span>名称</span><b class="arr arr-up dark"></b></div>
          <div class="nh nh-new">最新</div>
          <div class="nh nh-note">附注</div>
        </div>
        <div class="nav-body">
          <div class="nav-rows">
            <div class="nrow">
              <div class="ncell-name"><i class="gut"></i><i class="dash"></i><svg class="cb"><use href="#chk"/></svg><svg class="ficon" viewBox="0 0 14 14"><path d="M7 0v14M0 7h14" stroke="#222" stroke-width="1.100"/></svg><span>点 (3)</span></div>
              <div class="ncell-new"><svg class="tk"><use href="#tick"/></svg></div>
              <div class="ncell-note"></div>
            </div>
            <div class="nrow alt off">
              <div class="ncell-name"><i class="gut"></i><i class="dash"></i><svg class="cb"><use href="#chk"/></svg><svg class="ficon" viewBox="0 0 14 14"><path d="M2 1l10 2v10L2 11z" fill="#f6f8f4" stroke="#667"/></svg><span>基准平面 (4)</span></div>
              <div class="ncell-new"><svg class="tk"><use href="#tick"/></svg></div>
              <div class="ncell-note"></div>
            </div>
            <div class="nrow off">
              <div class="ncell-name"><i class="gut"></i><i class="dash"></i><svg class="cb"><use href="#chk"/></svg><svg class="ficon" viewBox="0 0 14 14"><path d="M.5.500h5v5h-5zM.5 8.500h5v5h-5zM8.500 8.500h5v5h-5z" fill="#fff" stroke="#222"/><path d="M8 6l5-5 1 1-5 5z" fill="#e0a020"/></svg><span>草图 (5) "SKETC...</span></div>
              <div class="ncell-new"><svg class="tk"><use href="#tick"/></svg></div>
              <div class="ncell-note"></div>
            </div>
            <div class="nrow alt">
              <div class="ncell-name"><i class="gut"></i><i class="dash"></i><svg class="cb"><use href="#chk"/></svg><svg class="ficon" viewBox="0 0 14 14"><path d="M0 2h14v10H0z" fill="#f4a450" stroke="#c87020" stroke-width=".7"/><path d="M4 2v10M9 2v10" stroke="#a05010"/><path d="M0 11h14v2H0z" fill="#3a5cc4"/></svg><span>拉伸 (6)</span></div>
              <div class="ncell-new"><svg class="tk"><use href="#tick"/></svg></div>
              <div class="ncell-note"></div>
            </div>
            <div class="nrow">
              <div class="ncell-name"><i class="gut"></i></div>
              <div class="ncell-new"></div>
              <div class="ncell-note"></div>
            </div>
          </div>
          <div class="vscroll">
            <svg viewBox="0 0 12 8"><path d="M2 6l4-4 4 4" fill="none" stroke="#555" stroke-width="1.300"/></svg>
            <div class="vtrack"><i></i></div>
            <svg viewBox="0 0 12 8"><path d="M2 2l4 4 4-4" fill="none" stroke="#555" stroke-width="1.300"/></svg>
          </div>
        </div>
        <div class="hscroll">
          <svg viewBox="0 0 8 12"><path d="M6 2L2 6l4 4" fill="none" stroke="#444" stroke-width="1.400"/></svg>
          <div class="htrack"><i></i></div>
          <svg viewBox="0 0 8 12"><path d="M2 2l4 4-4 4" fill="none" stroke="#444" stroke-width="1.400"/></svg>
        </div>
      </div>

      <div class="splitter"></div>

      <div class="sec sec-dep">
        <div class="sec-head"><span>相依性</span><svg viewBox="0 0 16 12"><path d="M1 10l7-8 7 8" fill="none" stroke="#2a85b5" stroke-width="2.400"/></svg></div>
        <div class="dep-body">
          <div class="dep-list"><i></i><i class="alt"></i><i></i><i class="alt"></i><i></i><i class="alt"></i></div>
          <div class="dep-btns">
            <div class="dbtn dbtn-on"><svg viewBox="0 0 24 24"><circle cx="9" cy="9" r="7" fill="#f6f8fa" stroke="#444" stroke-width="1.200"/><path d="M14 14l8 8" stroke="#777" stroke-width="3"/></svg></div>
            <div class="dbtn"><svg viewBox="0 0 16 16"><path d="M1 5h7V1l7 7-7 7v-4H1z" fill="#b5c4c8"/></svg></div>
            <div class="dbtn"><svg viewBox="0 0 16 16"><path d="M15 5H8V1L1 8l7 7v-4h7z" fill="#b5c4c8"/></svg></div>
            <div class="dbtn"><svg viewBox="0 0 20 20"><path d="M2 2h6v5H2zM2 8h6v5H2zM2 14h6v5H2zM2 4.500h6M2 10.500h6M2 16.500h6M5 2v17" fill="#d6d6d6" stroke="#aaa" stroke-width=".8"/><path d="M11 4h5M14 2v4M11 10h5M14 8v4M11 16h5M14 14v4" stroke="#c8a8a0" stroke-width="1.400"/></svg></div>
          </div>
        </div>
      </div>

      <div class="sec sec-detail">
        <div class="sec-head"><span>细节</span><svg viewBox="0 0 16 12"><path d="M1 10l7-8 7 8" fill="none" stroke="#2a85b5" stroke-width="2.400"/></svg></div>
        <div class="detail-table">
          <div class="dt-row dt-head"><div>参数</div><div>值</div><div class="dt-sort"><span>表达式</span><b class="arr arr-up dark"></b></div><div></div></div>
          <div class="dt-row"><div></div><div></div><div></div><div></div></div>
          <div class="dt-row alt"><div></div><div></div><div></div><div></div></div>
          <div class="dt-row"><div></div><div></div><div></div><div></div></div>
          <div class="dt-row alt"><div></div><div></div><div></div><div></div></div>
          <div class="dt-row"><div></div><div></div><div></div><div></div></div>
        </div>
      </div>

      <div class="sec sec-preview">
        <div class="sec-head"><span>预览</span><svg viewBox="0 0 16 12"><path d="M1 10l7-8 7 8" fill="none" stroke="#2a85b5" stroke-width="2.400"/></svg></div>
        <div class="preview-box">没有可用的预览</div>
      </div>
    </div>
  </section>

  <section class="viewport">
    <svg class="model" viewBox="406 204 1514 803" preserveAspectRatio="none">
      <rect x="406" y="204" width="1514" height="803" fill="url(#viewBg)"/>
      <g stroke="#4a3d28" stroke-width="0.900" stroke-linejoin="round">
        <path d="M863 389L947 366L1263 505L1180 528Z" fill="#ffb700"/>
        <path d="M1280 572L1364 549L1680 687L1597 710Z" fill="#ffb700"/>
        <path d="M1597 710L1680 687L1609 921L1526 944Z" fill="#b97200"/>
        <path d="M1180 528L1263 505C1256 520 1252 526 1243 537C1232 552 1222 575 1219 590C1216 606 1216 625 1221 645C1228 665 1240 680 1257 691L1252 697L1179 718C1152 700 1133 670 1133 637C1134 608 1148 582 1160 562C1168 549 1176 541 1180 528Z" fill="url(#notchFill)"/>
        <path d="M1179 718L1252 697C1240 712 1222 723 1203 723C1195 723 1187 721 1179 718Z" fill="#ffaf00"/>
        <path d="M863 389L1180 528C1176 541 1168 549 1160 562C1148 582 1134 608 1133 637C1133 670 1152 700 1179 718C1187 721 1195 723 1203 723C1222 723 1240 712 1252 697C1266 675 1275 650 1276.700 620C1277 605 1278 590 1280 572L1597 710L1526 944L792 624Z" fill="#d58000"/>
      </g>
      <path d="M1263 505C1256 520 1252 526 1243 537C1232 552 1222 575 1219 590C1216 606 1216 625 1221 645C1228 665 1240 680 1257 691" fill="none" stroke="#ff10ff" stroke-width="1.700"/>
      <path d="M1745 467v10M1740 472h10" stroke="#8fd49a"/>
      <path d="M1364 545v8M1360 549h8" stroke="#5ec06a" stroke-width=".8"/>
      <g class="triad">
        <path d="M465 914l12 4 15 9-3 20-12 11-16-5-12-6 6-22z" fill="#c4c7ca" fill-opacity=".55" stroke="#b0b3b5"/>
        <path d="M465 914l-5 7 22 12 10-6M482 933l-5 25M460 921l-10 27" fill="none" stroke="#b0b3b5"/>
        <path d="M470 937L477 915" stroke="#a8c8a8" stroke-width="3.500"/>
        <path d="M477 915L480 905" stroke="#2a8a35" stroke-width="4"/>
        <path d="M478 911l5-9 1 10z" fill="#2a8a35"/>
        <path d="M470 941L490 950" stroke="#e0a8a8" stroke-width="3"/>
        <path d="M490 950l8 4" stroke="#d83030" stroke-width="4"/>
        <path d="M495 950l12 8-13 0z" fill="#d83030"/>
        <path d="M467 941L457 944" stroke="#a8b8e8" stroke-width="3.500"/>
        <path d="M458 944l-8 3" stroke="#1530e0" stroke-width="5"/>
        <text class="tri-y" x="478" y="901">Y</text>
        <text class="tri-x" x="507" y="964">X</text>
        <text class="tri-z" x="444" y="951">Z</text>
      </g>
    </svg>
  </section>
</main>

<footer class="statusbar"></footer>

<!-- windows taskbar -->
<footer class="taskbar">
  <div class="start"><svg viewBox="0 0 20 20"><path d="M0 3l8-1v8H0zM9 2l11-2v10H9zM0 11h8v8l-8-1zM9 11h11v9L9 18z" fill="#fff"/></svg></div>
  <div class="search">
    <i class="cortana"></i>
    <span>有问题尽管问我</span>
    <svg viewBox="0 0 16 24"><path d="M5 1h6v14H5z" fill="none" stroke="#8a8a8a" stroke-width="1.500"/><path d="M1 11v5c0 3 14 3 14 0v-5M8 20v3M4 23h8" fill="none" stroke="#8a8a8a" stroke-width="1.500"/></svg>
  </div>
  <div class="tb-view"><svg viewBox="0 0 24 18"><path d="M5 1h14v16H5z" fill="none" stroke="#fff" stroke-width="1.300"/><path d="M3 4H1v10h2M21 4h2v10h-2" fill="none" stroke="#fff"/></svg></div>
  <div class="tb-app tb-q"><svg viewBox="0 0 30 30"><circle cx="15" cy="14" r="11" fill="none" stroke="#1a8cf0" stroke-width="6"/><path d="M14 25c0-5 6-5 7-3 3-2 7 0 7 3 0 2-1 2-3 2H17c-2 0-3-1-3-2z" fill="#fff"/></svg></div>
  <div class="tb-app tb-nx"><svg viewBox="0 0 30 30"><circle cx="15" cy="16" r="11" fill="#1a9ae0"/><path d="M7 12c3-4 8-7 12-6l6 9c0 5-3 8-6 9-6-3-10-7-12-12z" fill="#2fa050"/><path d="M4 3l12 1-5 10z" fill="#e02040"/><path d="M1 27c10 2 24-6 27-14 1-3-1-5-4-5 2 7-14 17-23 19z" fill="#f0a020"/></svg></div>
  <div class="tray">
    <svg class="t-up" viewBox="0 0 16 10"><path d="M1 9l7-7 7 7" fill="none" stroke="#ddd" stroke-width="1.200"/></svg>
    <svg class="t-bat" viewBox="0 0 22 14"><path d="M1 0v3M4 0v3M0 3h5v3H3v3" fill="none" stroke="#eee"/><path d="M6 4h15v8H6z" fill="#eee"/></svg>
    <svg class="t-vol" viewBox="0 0 20 16"><path d="M1 5h4l4-4v14l-4-4H1z" fill="none" stroke="#fff"/><path d="M12 4c2 2 2 6 0 8M15 2c3 3 3 9 0 12" fill="none" stroke="#fff"/></svg>
    <svg class="t-wifi" viewBox="0 0 20 16"><path d="M2 15C4 7 10 4 17 3M7 15c1-4 4-6 9-7M12 15c0-2 1-3 3-3" fill="none" stroke="#bfe" stroke-width="1.200"/></svg>
    <span class="t-ime">中</span>
    <svg class="t-sogou" viewBox="0 0 20 20"><path d="M2 2h17v12l-8 5-9-3z" fill="#f04a1a"/><path d="M6 6h8M8 11h6l-2 4" fill="none" stroke="#fff" stroke-width="2"/></svg>
    <div class="clock"><span>11:10</span><span>2017/4/21</span></div>
    <svg class="t-note" viewBox="0 0 20 18"><path d="M1 1h18v12H11l-2 3-2-3H1z" fill="none" stroke="#fff"/></svg>
  </div>
</footer>

<!-- site watermark sits over the window -->
<div class="meter"></div>
<div class="watermark">
  <svg viewBox="0 0 86 98"><path d="M43 1l42 24v48L43 97 1 73V25z" fill="#2f7fb8" fill-opacity=".72" stroke="#e8e8ea" stroke-width="2"/><path d="M43 1l42 24-14 44C80 40 60 12 43 1z" fill="#6ec4ea" fill-opacity=".8"/><path d="M1 73c6-24 14-40 42-48L26 43v34l17 20z" fill="#174a80" fill-opacity=".55"/><path d="M43 27l22 12v24L43 76 21 63V39z" fill="#5ab0de" stroke="#e8f0f4" stroke-width="2.500"/><path d="M43 27l22 12-22 12-22-12z" fill="#78a6d8"/><path d="M21 39l22 12v25L21 63z" fill="#1c5088"/></svg>
  <div class="wm-text">
    <span class="wm-main">3D世界网</span>
    <span class="wm-url">WWW.3DSJW.COM</span>
  </div>
</div>

</body>
</html>
```

FILE: styles.css
```css
* {
  box-sizing: border-box;
}

html, body {
  margin: 0;
  height: 100%;
}

body {
  width: 1920px;
  height: 1080px;
  overflow: hidden;
  display: flex;
  flex-direction: column;
  position: relative;
  background: #fff;
  color: #222;
  font-family: "Noto Sans CJK SC", "Noto Sans", sans-serif;
  font-size: 14px;
  line-height: 1;
}

.defs {
  position: absolute;
}

svg {
  display: block;
  flex: none;
}

i, b {
  font-style: normal;
  font-weight: normal;
}

/* small drop arrows */
.arr {
  display: block;
  flex: none;
  width: 7px;
  height: 4px;
  background: #222;
  clip-path: polygon(0 0, 100% 0, 50% 100%);
}

.arr-up {
  clip-path: polygon(50% 0, 100% 100%, 0 100%);
  background: #bbb;
}

.arr-up.dark {
  background: #222;
  width: 10px;
  height: 6px;
}

.arr-bar {
  height: 8px;
  clip-path: polygon(0 0, 100% 0, 100% 12%, 0 12%, 0 35%, 100% 35%, 50% 100%, 0 35%);
}

/* title bar */
.titlebar {
  height: 30px;
  flex: none;
  display: flex;
  align-items: center;
  background: #fff;
}

.qat {
  display: flex;
  align-items: center;
  width: 971px;
  flex: none;
  font-size: 15px;
}

.nx-logo {
  width: 37px;
  flex: none;
  margin-left: 4px;
  font-family: "Liberation Sans", sans-serif;
  font-size: 26px;
  font-weight: 700;
  color: #7f93a4;
  letter-spacing: -1px;
}

.qsep {
  width: 1px;
  height: 24px;
  flex: none;
  background: #ddd;
  margin-left: 5px;
}

.qi {
  width: 15px;
  height: 15px;
}

.q-save { margin-left: 10px; }
.q-s1 { margin-left: 7px; }
.q-undo { margin-left: 7px; }
.q-a1 { margin-left: 9px; }
.q-redo { margin-left: 7px; }
.q-s2 { margin-left: 6px; }
.q-cut { margin-left: 7px; }
.q-copy { margin-left: 8px; }
.q-paste { margin-left: 7px; }
.q-s3 { margin-left: 7px; }
.q-grp { margin-left: 5px; }
.q-a2 { margin-left: 7px; }
.q-s4 { margin-left: 4px; }
.q-brush { margin-left: 6px; }
.q-s5 { margin-left: 6px; }
.q-win { margin-left: 9px; width: 16px; height: 16px; }
.q-wintext { margin-left: 2px; flex: none; white-space: nowrap; }
.q-a3 { margin-left: 5px; }
.q-a4 { margin-left: 4px; }

.doc-title {
  width: 768px;
  flex: none;
  font-size: 16px;
  color: #111;
}

.siemens {
  width: 97px;
  flex: none;
  font-family: "Liberation Sans", sans-serif;
  font-size: 15.500px;
  font-weight: 700;
  color: #0f9a9c;
}

.winbtns {
  display: flex;
  gap: 16px;
  align-items: center;
}

.winbtns svg {
  width: 14px;
  height: 14px;
}

/* tab row */
.tabbar {
  height: 32px;
  flex: none;
  display: flex;
  align-items: flex-end;
  background: #c8d7d5;
  font-size: 16px;
}

.tab-file {
  width: 90px;
  height: 32px;
  margin-right: 3px;
  padding-bottom: 2px;
  display: flex;
  align-items: center;
  justify-content: center;
  background: #5a8a82;
  color: #fff;
}

.tab {
  width: 58px;
  height: 32px;
  flex: none;
  display: flex;
  align-items: center;
  justify-content: center;
  white-space: nowrap;
}

.tab-wide {
  width: 90px;
}

.tab-on {
  background: #fff;
  color: #2a8ac0;
  border-top: 1px solid #e8eeee;
}

.cmd-search {
  width: 158px;
  height: 24px;
  margin: 0 0 4px auto;
  display: flex;
  align-items: center;
  justify-content: space-between;
  padding: 0 5px 0 3px;
  background: #fff;
  border: 1px solid #aaa;
  font-size: 14px;
}

.cmd-search svg {
  width: 15px;
  height: 15px;
}

.tabbar-tools {
  display: flex;
  align-items: center;
  height: 32px;
  width: 166px;
  flex: none;
}

.tt-full { width: 18px; height: 18px; margin-left: 10px; }
.tt-up { width: 14px; height: 14px; margin-left: 10px; }
.tt-help { width: 14px; height: 14px; margin-left: 13px; }
.tt-min { width: 14px; height: 14px; margin-left: 10px; }
.tt-rest { width: 14px; height: 14px; margin-left: 10px; }
.tt-close { width: 14px; height: 14px; margin-left: 12px; }

/* ribbon */
.ribbon {
  height: 106px;
  flex: none;
  display: grid;
  grid-template-columns: 201px 410px 193px 43px 104px 52px 58px 53px 98px 28px 288px 1fr;
  align-items: start;
  padding-top: 5px;
  background: #fff;
  border-bottom: 1px solid #ddd;
}

.grp {
  height: 95px;
  border-right: 1px solid #dcdcdc;
}

.grp-last {
  border-right: 0;
}

.grp-body {
  height: 80px;
  display: flex;
}

.grp-label {
  height: 15px;
  display: flex;
  line-height: 18px;
  color: #3b93c4;
  font-size: 14px;
  white-space: nowrap;
}

.grp-label span {
  flex: 1;
  text-align: center;
}

.grp-label .arr {
  width: 6px;
  margin: 8px 8px 0;
}

.big {
  display: flex;
  flex-direction: column;
  align-items: center;
  flex: none;
  font-size: 14px;
  white-space: nowrap;
}

.big-icon {
  height: 38px;
  width: 34px;
}

.big > span:not(.arr) {
  height: 18px;
  line-height: 18px;
}

.big .arr {
  margin-top: 5px;
}

.g-sketch {
  padding-left: 14px;
}

.big-sketch {
  width: 30px;
}

.gallery {
  width: 117px;
  height: 77px;
  margin-left: 13px;
  display: grid;
  grid-template-columns: repeat(3, 1fr);
  grid-template-rows: repeat(2, 1fr);
  align-items: center;
  justify-items: center;
  border: 1px solid #dcdcdc;
}

.gallery svg {
  width: 34px;
  height: 30px;
}

.gal-scroll {
  width: 22px;
  height: 77px;
  display: flex;
  flex-direction: column;
  align-items: center;
  justify-content: space-around;
  padding: 6px 0;
}

.gal-scroll .arr-bar {
  height: 7px;
}

.g-feat {
  padding-left: 11px;
}

.big-plane { width: 56px; }
.big-extrude { width: 32px; margin-left: 8px; }
.big-hole { width: 32px; margin-left: 8px; }

.cmds {
  display: flex;
  flex-direction: column;
  flex: none;
  margin-top: -3px;
}

.cmd {
  height: 26px;
  flex: none;
  display: flex;
  align-items: center;
  gap: 4px;
  white-space: nowrap;
}

.cmd svg {
  width: 16px;
  height: 16px;
}

.cmd .arr {
  margin-left: 6px;
}

.cmds-a { width: 76px; margin-left: 12px; margin-right: 7px; }
.big-blend { width: 44px; }
.cmds-b { width: 62px; margin-left: 8px; margin-right: 12px; }

.big-more {
  width: 36px;
}

.more-box {
  width: 36px;
  height: 36px;
  margin-top: -1px;
  margin-bottom: 3px;
  display: flex;
  align-items: center;
  justify-content: center;
  border: 1px solid #eee;
  border-radius: 3px;
}

.more-box svg {
  width: 16px;
  height: 16px;
}

.g-sync {
  padding-left: 11px;
}

.big-move { width: 43px; }
.cmds-c { width: 76px; margin-left: 9px; margin-right: 12px; }

.g-surf {
  justify-content: center;
}

.big-surf { width: 30px; }

.tools {
  flex-direction: column;
  padding-top: 2px;
}

.g-std { padding-left: 2px; }
.g-gear { padding-left: 4px; }
.g-spring { padding-left: 4px; }
.g-add { padding-left: 4px; }
.g-model { padding-left: 3px; }
.g-mark { padding-left: 2px; }
.g-dim { padding-left: 3px; }

.trow {
  height: 31px;
  display: flex;
  align-items: center;
}

.trow > svg {
  width: 20px;
  height: 20px;
  margin: 0 1.500px;
}

.trow > svg.wide {
  width: 22px;
  margin: 0 1.500px;
}

.vs {
  width: 1px;
  height: 20px;
  margin: 0 3px;
  background: #d4d4d4;
  flex: none;
}

.vs.tight {
  margin: 0 2px;
}

.fmt {
  width: 23px;
  flex: none;
  display: flex;
  flex-direction: column;
  align-items: center;
  font-family: "Liberation Sans", sans-serif;
  font-size: 9px;
  line-height: 9px;
  color: #333;
  white-space: nowrap;
}

.fmt b {
  font-weight: 700;
}

.fmt u {
  text-decoration: none;
  color: #b04040;
  font-size: 7px;
  line-height: 6px;
  font-weight: 700;
  text-align: center;
}

.fmt s {
  text-decoration: none;
  color: #999;
}

.fmt .boxed {
  padding: 1px;
  border: 1px solid #b02020;
}

.fmt .paren i {
  color: #b02020;
}

.fmt.blue,
.fmt.blue u {
  color: #4a50c8;
}

.fmt.blue u {
  font-size: 6px;
  font-weight: 400;
}

.fit-cell {
  width: 23px;
  display: flex;
  flex-direction: column;
  align-items: center;
  gap: 1px;
}

.fit-cell svg {
  width: 13px;
  height: 8px;
}

.h7 {
  font-family: "Liberation Sans", sans-serif;
  font-size: 8px;
  font-weight: 700;
  color: #333;
}

.h7 em {
  font-style: normal;
  color: #b02020;
}

/* selection bar */
.selbar {
  height: 36px;
  flex: none;
  display: flex;
  align-items: center;
  background: #fff;
  border-bottom: 1px solid #a0a0a0;
}

.menu-btn {
  width: 98px;
  flex: none;
  display: flex;
  align-items: center;
  padding-left: 10px;
  gap: 5px;
}

.menu-btn svg {
  width: 15px;
  height: 15px;
}

.menu-btn u {
  text-underline-offset: 2px;
}

.selsep {
  width: 1px;
  height: 26px;
  flex: none;
  background: #ddd;
}

.combo {
  height: 24px;
  flex: none;
  display: flex;
  align-items: center;
  justify-content: space-between;
  padding: 0 7px 0 3px;
  border: 1px solid #a8a8a8;
}

.combo .arr {
  width: 8px;
  height: 5px;
}

.combo-a {
  width: 167px;
  margin-left: 11px;
}

.combo-b {
  width: 176px;
  margin-left: 8px;
}

.sel-tools {
  flex: 1;
  display: flex;
  align-items: center;
  padding-left: 4px;
}

.sel-tools > svg {
  width: 18px;
  height: 18px;
  margin: 0 2px;
}

.sel-tools > .arr {
  width: 6px;
  margin: 0 2px;
}

.tog {
  width: 23px;
  height: 23px;
  flex: none;
  display: flex;
  align-items: center;
  justify-content: center;
  background: #c8d7d5;
  border: 1px solid #a4bab6;
}

.tog svg {
  width: 19px;
  height: 19px;
}

/* gaps between cells; icons and arrows already carry 2px each side */
.sel-tools > svg.g1, .sel-tools > .arr.g1 { margin-left: 3px; }
.sel-tools > svg.g2, .sel-tools > .arr.g2 { margin-left: 4px; }
.sel-tools > svg.g3 { margin-left: 5px; }
.sel-tools > svg.g4 { margin-left: 6px; }
.sel-tools > svg.g5 { margin-left: 7px; }
.sel-tools > svg.g6 { margin-left: 8px; }
.tog.g1 { margin-left: 1px; }
.tog.g3 { margin-left: 3px; }
.tog.g4 { margin-left: 4px; }

.sep-view { margin: 0 8px; }
.sep-end { margin-left: 8px; }

.sel-tools > .arr-far {
  margin-left: auto;
  margin-right: 5px;
}

/* main area */
.workspace {
  height: 804px;
  flex: none;
  display: flex;
  border-bottom: 1px solid #a8a8a8;
}

.rail {
  width: 32px;
  flex: none;
  display: flex;
  flex-direction: column;
  align-items: center;
  background: #dcdcdc;
  border-right: 1px solid #a8a8a8;
}

.r-gear {
  width: 15px;
  height: 15px;
  margin-top: 6px;
}

.r-icon {
  width: 24px;
  height: 24px;
  margin-left: 3px;
}

.r1 { margin-top: 24px; }
.r2 { margin-top: 21px; }
.r3 { margin-top: 9px; }
.r4 { margin-top: 30px; }
.r5 { margin-top: 30px; }
.r6 { margin-top: 29px; }
.r7 { margin-top: 18px; }
.r8 { margin-top: 19px; }
.r9 { margin-top: 16px; }
.r10 { margin-top: 19px; }
.r11 { margin-top: 18px; }

.rail-tab {
  width: 31px;
  height: 46px;
  margin-top: 9px;
  margin-left: 3px;
  display: flex;
  align-items: center;
  justify-content: center;
  background: #fff;
  border: 1px solid #a8a8a8;
  border-right: 0;
}

.rail-tab svg {
  width: 24px;
  height: 24px;
}

.sidepanel {
  width: 374px;
  flex: none;
  padding: 0 9px 6px 6px;
  background: #fff;
  border-right: 2px solid #a0a0a0;
}

.panel-frame {
  height: 100%;
  display: flex;
  flex-direction: column;
  border: 1px solid #dcdcdc;
  border-top: 0;
}

.nav-title {
  height: 30px;
  flex: none;
  margin: 0 -1px;
  padding: 1px 0 0 4px;
  display: flex;
  align-items: center;
  justify-content: space-between;
  background: #fff;
  font-size: 15px;
}

.maxbox {
  width: 14px;
  height: 13px;
  margin-left: auto;
  margin-top: 2px;
  border: 1px solid #222;
  border-top-width: 2px;
  transform: translateX(-7px);
}

.navtable {
  height: 151px;
  flex: none;
  padding: 2px 2px 3px;
  border-bottom: 1px solid #ddd;
  background: #fff;
}

.nav-head {
  height: 24px;
  display: grid;
  grid-template-columns: 200px 100px 1fr;
  background: #f0f0f0;
  border-bottom: 1px solid #d4d4d4;
}

.nh {
  display: flex;
  align-items: center;
  padding-left: 6px;
  font-size: 14px;
  border-right: 1px solid #dedede;
}

.nh-note { border-right: 0; }

.nh-name .arr {
  margin-left: 18px;
}

.nav-body {
  height: 102px;
  display: flex;
  overflow: hidden;
}

.nav-rows {
  width: 334px;
  flex: none;
  overflow: hidden;
}

.nrow {
  height: 24px;
  display: grid;
  grid-template-columns: 200px 100px 1fr;
  border-bottom: 1px solid #ececec;
  background: #fff;
}

.nrow.alt {
  background: #f9f9f9;
}

.nrow.off span {
  color: #8e8e8e;
}

.ncell-name {
  display: flex;
  align-items: center;
  font-size: 15px;
  white-space: nowrap;
  border-right: 1px solid #ececec;
}

.gut {
  width: 28px;
  height: 25px;
  flex: none;
  border-right: 1px dotted #5aa06a;
}

.dash {
  width: 11px;
  flex: none;
  border-top: 1px dotted #777;
}

.cb {
  width: 13px;
  height: 13px;
}

.ficon {
  width: 14px;
  height: 14px;
  margin: 0 4px 0 2px;
}

.ncell-new {
  display: flex;
  align-items: center;
  padding-left: 4px;
  border-right: 1px solid #ececec;
}

.tk {
  width: 14px;
  height: 14px;
}

.vscroll {
  flex: 1;
  display: flex;
  flex-direction: column;
  align-items: center;
  background: #f0f0f0;
  padding: 8px 2px 0 0;
}

.vscroll svg {
  width: 12px;
  height: 8px;
}

.vtrack {
  width: 100%;
  height: 71px;
  padding-top: 38px;
  margin-bottom: 5px;
}

.vtrack i {
  display: block;
  width: 19px;
  height: 21px;
  background: #c8c8c8;
}

.hscroll {
  height: 20px;
  display: flex;
  align-items: center;
  padding-left: 6px;
  background: #f0f0f0;
}

.hscroll svg {
  width: 8px;
  height: 12px;
}

.htrack {
  width: 304px;
  height: 19px;
  padding-left: 7px;
}

.htrack i {
  display: block;
  width: 242px;
  height: 19px;
  background: #c8c8c8;
}

.splitter {
  height: 5px;
  flex: none;
  margin: 0 -1px;
  background: #d4d4d4;
  border: 1px solid #bbb;
}

.sec {
  flex: none;
  background: #fff;
}

.sec-head {
  height: 28px;
  display: flex;
  align-items: center;
  justify-content: space-between;
  padding: 0 4px 0 6px;
  font-size: 18px;
  color: #3b93c4;
}

.sec-head svg {
  width: 16px;
  height: 12px;
}

.sec-dep {
  height: 184px;
  border-bottom: 2px solid #e0e0e0;
}

.dep-body {
  display: flex;
  padding: 4px 0 0 6px;
}

.dep-list {
  width: 310px;
  height: 146px;
  flex: none;
  padding: 0 1px;
  border: 1px solid #ddd;
}

.dep-list i {
  display: block;
  height: 24px;
  border-bottom: 1px solid #ececec;
}

.dep-list i.alt {
  background: #fafafa;
}

.dep-list i:last-child {
  border-bottom: 0;
}

.dep-btns {
  margin-left: 2px;
  display: flex;
  flex-direction: column;
  gap: 2px;
}

.dbtn {
  width: 32px;
  height: 32px;
  display: flex;
  align-items: center;
  justify-content: center;
  border: 1px solid #e0e0e0;
}

.dbtn-on {
  border-color: #9a9a9a;
}

.dbtn svg {
  width: 24px;
  height: 24px;
}

.sec-detail {
  height: 186px;
  border-bottom: 2px solid #dcdcdc;
}

.detail-table {
  height: 148px;
  margin: 4px 5px 0 6px;
  padding: 1px;
  border: 1px solid #ddd;
}

.dt-row {
  height: 24px;
  display: grid;
  grid-template-columns: 64px 40px 88px 1fr;
  border-bottom: 1px solid #ececec;
}

.dt-row:last-child {
  border-bottom: 0;
}

.dt-row div {
  display: flex;
  align-items: center;
  padding-left: 6px;
  border-right: 1px solid #ececec;
}

.dt-row.alt {
  background: #f9f9f9;
}

.dt-head {
  height: 25px;
  background: #f0f0f0;
  border-bottom: 1px solid #d4d4d4;
}

.dt-head div {
  border-right: 1px solid #dcdcdc;
}

.dt-sort .arr {
  margin-left: 18px;
}

.sec-preview {
  flex: 1;
}

.preview-box {
  width: 247px;
  height: 185px;
  margin: 5px 0 0 55px;
  display: flex;
  align-items: center;
  justify-content: center;
  border: 1px solid #dcdcdc;
  font-size: 15px;
}

.viewport {
  flex: 1;
  min-width: 0;
}

.model {
  width: 100%;
  height: 100%;
}

.tri-y, .tri-x, .tri-z {
  font-family: "Liberation Sans", sans-serif;
  font-size: 11px;
}

.tri-y { fill: #2a8a35; }
.tri-x { fill: #d83030; }
.tri-z { fill: #1530e0; font-weight: 700; }

.statusbar {
  height: 22px;
  flex: none;
  background: #fff;
}

/* taskbar */
.taskbar {
  height: 50px;
  flex: none;
  display: flex;
  background: #000;
  color: #fff;
}

.start {
  width: 60px;
  flex: none;
  display: flex;
  align-items: center;
  justify-content: center;
}

.start svg {
  width: 20px;
  height: 20px;
}

.search {
  width: 430px;
  flex: none;
  display: flex;
  align-items: center;
  background: #333;
  padding-left: 12px;
  color: #8a8a8a;
  font-size: 19px;
}

.cortana {
  width: 27px;
  height: 27px;
  flex: none;
  margin-right: 6px;
  border: 3px solid #ddd;
  border-radius: 50%;
}

.search span {
  flex: 1;
}

.search svg {
  width: 16px;
  height: 24px;
  margin-right: 18px;
}

.tb-view {
  width: 69px;
  flex: none;
  padding-right: 9px;
  display: flex;
  align-items: center;
  justify-content: center;
}

.tb-view svg {
  width: 24px;
  height: 18px;
}

.tb-app {
  height: 50px;
  flex: none;
  display: flex;
  align-items: center;
  justify-content: center;
  border-bottom: 3px solid #ffffb0;
}

.tb-app svg {
  width: 31px;
  height: 31px;
}

.tb-q {
  width: 51px;
}

.tb-nx {
  width: 61px;
  margin-left: 6px;
  background: #333;
}

.tray {
  flex: 1;
  display: flex;
  align-items: center;
}

.t-up { width: 16px; height: 10px; margin-left: 898px; }
.t-bat { width: 20px; height: 14px; margin-left: 12px; }
.t-vol { width: 20px; height: 16px; margin-left: 8px; opacity: .55; }
.t-wifi { width: 20px; height: 16px; margin-left: 14px; opacity: .55; }
.t-ime { width: 16px; margin-left: 9px; font-size: 16px; }
.t-sogou { width: 20px; height: 20px; margin-left: 20px; }

.clock {
  width: 74px;
  margin-left: 19px;
  display: flex;
  flex-direction: column;
  align-items: center;
  gap: 10px;
  font-family: "Liberation Sans", sans-serif;
  font-size: 16px;
}

.t-note { width: 20px; height: 18px; margin-left: 26px; }

/* overlays */
.meter {
  position: absolute;
  right: 0;
  top: 948px;
  width: 12px;
  height: 58px;
  background: repeating-linear-gradient(#5a6a50 0 2px, #aab060 2px 3px);
  border-radius: 4px 0 0 0;
  border: 2px solid #555;
  border-right: 0;
}

.watermark {
  position: absolute;
  left: 1618px;
  top: 976px;
  display: flex;
  gap: 8px;
}

.watermark svg {
  width: 86px;
  height: 98px;
}

.wm-text {
  display: flex;
  flex-direction: column;
  width: 205px;
  padding-top: 16px;
  font-family: "Noto Sans CJK SC", sans-serif;
  position: relative;
}

/* red blotch from the tray icon showing through the lettering */
.wm-text::after {
  content: "";
  position: absolute;
  left: 84px;
  top: 24px;
  width: 22px;
  height: 26px;
  border-radius: 40% 60% 50% 50%;
  background: #f0501e;
  opacity: .75;
}

.wm-main {
  font-size: 46px;
  line-height: 50px;
  font-weight: 700;
  color: #5cb8e6;
  white-space: nowrap;
  -webkit-text-stroke: 1px #eef6fa;
}

.wm-url {
  font-family: "Liberation Sans", sans-serif;
  font-size: 20px;
  font-weight: 700;
  line-height: 22px;
  letter-spacing: 1px;
  color: #3a8ab0;
  white-space: nowrap;
  -webkit-text-stroke: 1px #e2eef4;
}
```
